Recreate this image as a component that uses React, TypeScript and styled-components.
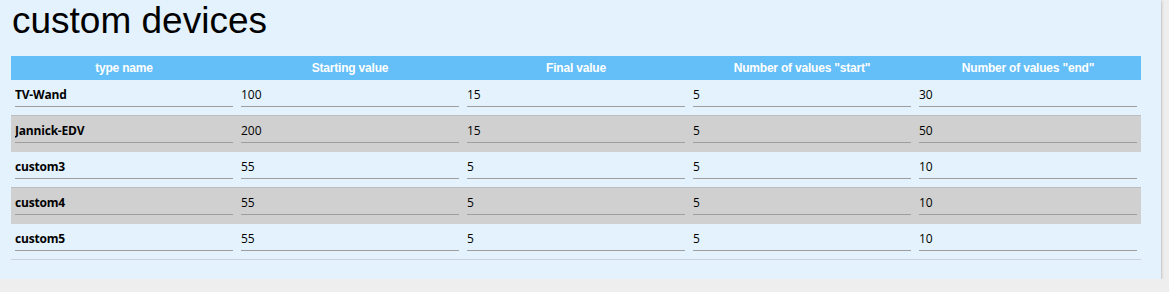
import React from "react";
import styled, { createGlobalStyle } from "styled-components";

const GlobalStyle = createGlobalStyle`
  body {
    margin: 0;
    background-color: #eeeeee;
    font-family: "Liberation Sans", Arial, sans-serif;
  }
`;

const Panel = styled.div`
  background-color: #e3f2fd;
  width: 1161px;
  box-sizing: border-box;
  padding: 0 20px 19px 11px;
  box-shadow: 0 1px 3px rgba(0, 0, 0, 0.35);
`;

const Title = styled.h1`
  margin: 0;
  padding: 0 0 14px 1px;
  font-size: 37px;
  font-weight: 400;
  line-height: 42px;
  color: #000;
`;

const Table = styled.table`
  width: 100%;
  border-collapse: collapse;
  table-layout: fixed;
  border-bottom: 1px solid #c9d3dc;
`;

const HeadCell = styled.th`
  background-color: #64bef8;
  color: #fff;
  font-size: 12px;
  font-weight: 700;
  letter-spacing: -0.2px;
  height: 23px;
  padding: 0;
  text-align: center;
`;

const Row = styled.tr<{ $shaded: boolean }>`
  background-color: ${(p) => (p.$shaded ? "#d0d0d0" : "transparent")};
  & > td {
    border-top: 1px solid ${(p) => (p.$shaded ? "#bdbdbd" : "transparent")};
  }
`;

const Cell = styled.td`
  height: 35px;
  padding: 0 4px;
  vertical-align: top;
`;

const Field = styled.input<{ $bold?: boolean }>`
  display: block;
  width: 100%;
  box-sizing: border-box;
  margin-top: 5px;
  height: 22px;
  padding: 0 0 3px;
  border: none;
  border-bottom: 1px solid #9e9e9e;
  background: transparent;
  font-family: "Open Sans", "Noto Sans", sans-serif;
  font-size: 12px;
  font-weight: ${(p) => (p.$bold ? 700 : 400)};
  letter-spacing: ${(p) => (p.$bold ? "-0.2px" : "0")};
  color: #000;
  outline: none;
`;

type Device = {
  name: string;
  start: number;
  final: number;
  countStart: number;
  countEnd: number;
};

const devices: Device[] = [
  { name: "TV-Wand", start: 100, final: 15, countStart: 5, countEnd: 30 },
  { name: "Jannick-EDV", start: 200, final: 15, countStart: 5, countEnd: 50 },
  { name: "custom3", start: 55, final: 5, countStart: 5, countEnd: 10 },
  { name: "custom4", start: 55, final: 5, countStart: 5, countEnd: 10 },
  { name: "custom5", start: 55, final: 5, countStart: 5, countEnd: 10 },
];

const columns = [
  "type name",
  "Starting value",
  "Final value",
  'Number of values "start"',
  'Number of values "end"',
];

const App = () => {
  return (
    <>
      <GlobalStyle />
      <Panel>
        <Title>custom devices</Title>
        <Table>
          <thead>
            <tr>
              {columns.map((c) => (
                <HeadCell key={c}>{c}</HeadCell>
              ))}
            </tr>
          </thead>
          <tbody>
            {devices.map((d, i) => (
              <Row key={d.name} $shaded={i % 2 === 1}>
                <Cell>
                  <Field $bold defaultValue={d.name} />
                </Cell>
                <Cell>
                  <Field defaultValue={d.start} />
                </Cell>
                <Cell>
                  <Field defaultValue={d.final} />
                </Cell>
                <Cell>
                  <Field defaultValue={d.countStart} />
                </Cell>
                <Cell>
                  <Field defaultValue={d.countEnd} />
                </Cell>
              </Row>
            ))}
          </tbody>
        </Table>
      </Panel>
    </>
  );
};

export default App;
